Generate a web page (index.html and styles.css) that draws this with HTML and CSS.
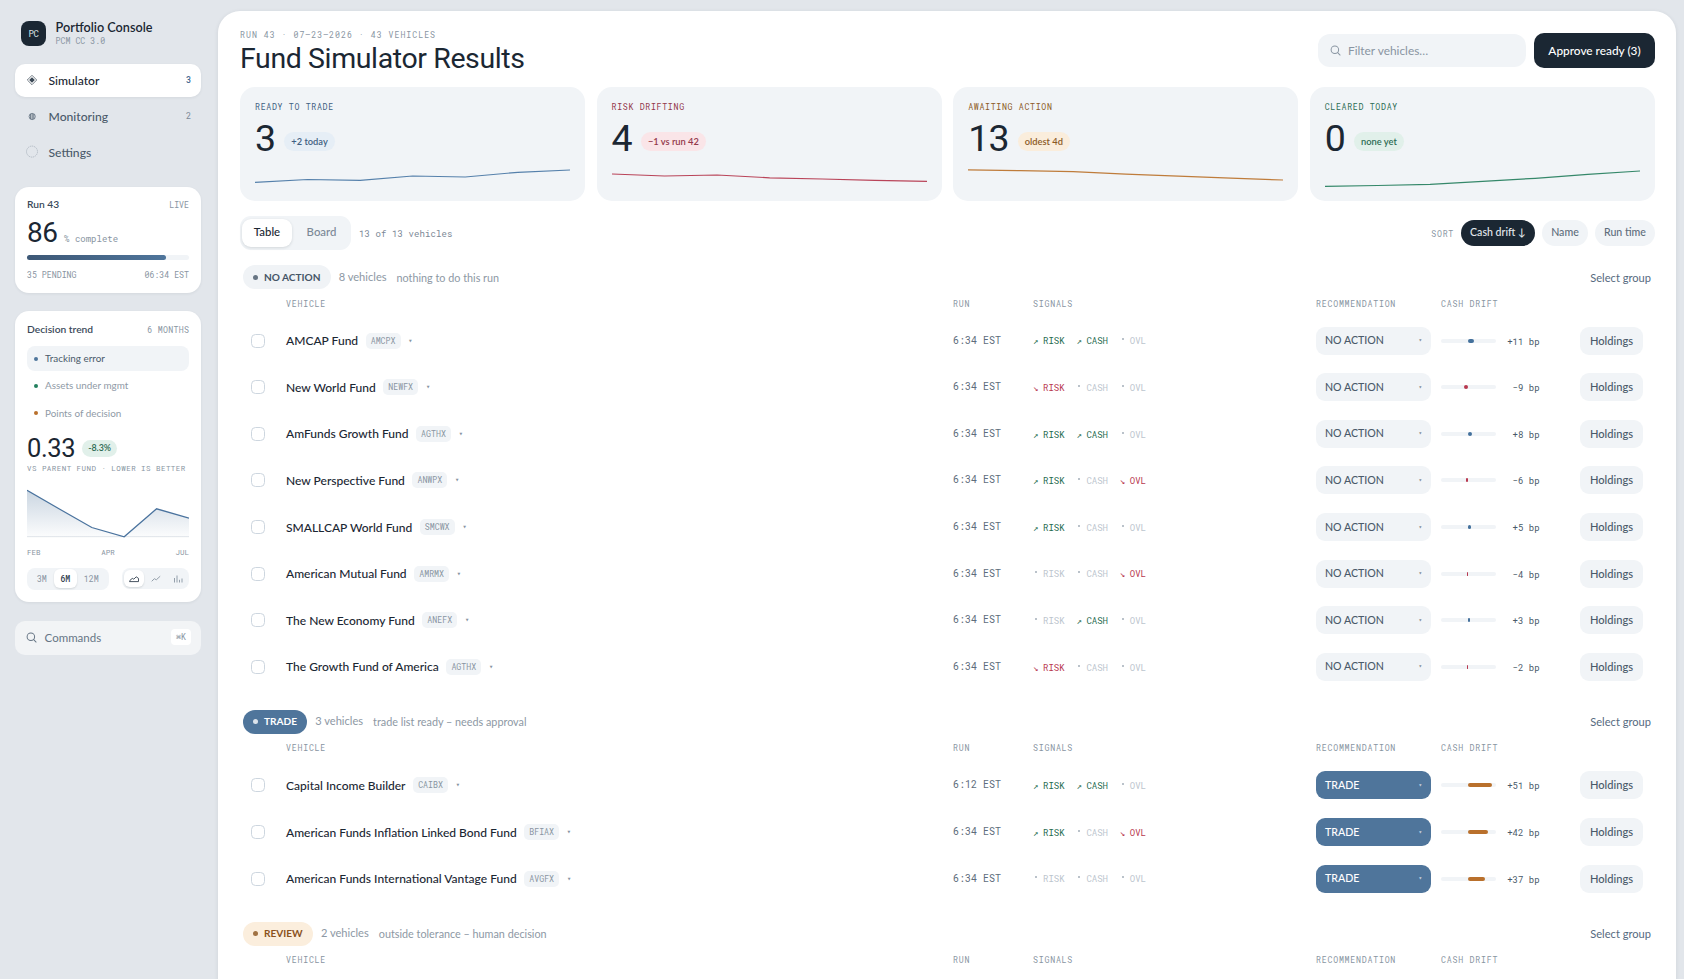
FILE: index.html
```html
<!DOCTYPE html>
<html lang="en">
<head>
<meta charset="utf-8">
<title>Portfolio Console</title>
<link rel="stylesheet" href="styles.css">
</head>
<body>
<svg class="defs" width="0" height="0">
  <symbol id="search" viewBox="0 0 12 12"><circle cx="5.3" cy="5.3" r="4.1"/><path d="M8.4 8.4 11 11"/></symbol>
</svg>
<div class="app">
  <aside class="side">
    <div class="brand">
      <span class="logo">PC</span>
      <div><div class="brand-name">Portfolio Console</div><div class="brand-sub">PCM CC 3.0</div></div>
    </div>
    <nav class="nav">
      <a class="nav-item on"><svg class="nav-ic" viewBox="0 0 12 12"><path d="M6 1.3 10.7 6 6 10.7 1.3 6Z" fill="none" stroke="currentColor" stroke-width=".7"/><path d="M6 3.2 8.8 6 6 8.8 3.2 6Z" fill="currentColor"/></svg><span>Simulator</span><b>3</b></a>
      <a class="nav-item"><svg class="nav-ic" viewBox="0 0 12 12"><circle cx="6.2" cy="6.5" r="3.1" fill="none" stroke="currentColor" stroke-width=".8"/><path d="M4.6 4v5M6.2 3.5v6M7.8 4v5" stroke="currentColor" stroke-width=".9"/></svg><span>Monitoring</span><b>2</b></a>
      <a class="nav-item"><svg class="nav-ic faint" viewBox="0 0 12 12"><circle cx="6" cy="5.6" r="5.5" fill="none" stroke="currentColor" stroke-width=".8" stroke-dasharray="1.4 .7"/></svg><span>Settings</span></a>
    </nav>
    <section class="card run">
      <div class="row-between"><h2>Run 43</h2><span class="mono">LIVE</span></div>
      <div class="run-val"><strong>86</strong><span>% complete</span></div>
      <div class="bar"><i></i></div>
      <div class="row-between foot"><span class="mono">35 PENDING</span><span class="mono">06:34 EST</span></div>
    </section>
    <section class="card trend">
      <div class="row-between"><h2>Decision trend</h2><span class="mono wide">6 MONTHS</span></div>
      <ul class="metrics">
        <li class="on"><i class="blue"></i>Tracking error</li>
        <li><i class="green"></i>Assets under mgmt</li>
        <li><i class="amber"></i>Points of decision</li>
      </ul>
      <div class="trend-val"><strong>0.33</strong><span>-8.3%</span></div>
      <div class="trend-cap">VS PARENT FUND · LOWER IS BETTER</div>
      <svg class="chart" viewBox="0 0 162 52">
        <defs><linearGradient id="fade" x1="0" y1="0" x2="0" y2="1"><stop offset="0" stop-color="#4f759b" stop-opacity=".3"/><stop offset="1" stop-color="#4f759b" stop-opacity=".02"/></linearGradient></defs>
        <path d="M0 49.7H162" stroke="#e2e6eb"/>
        <path d="M0 3.3 32.4 22 64.8 40.5 97.2 49.8 129.6 21.8 162 31.2V50H0Z" fill="url(#fade)"/>
        <path d="M0 3.3 32.4 22 64.8 40.5 97.2 49.8 129.6 21.8 162 31.2" fill="none" stroke="#4a739e" stroke-width="1.3"/>
      </svg>
      <div class="row-between months"><span>FEB</span><span>APR</span><span>JUL</span></div>
      <div class="controls">
        <div class="seg"><span>3M</span><span class="on">6M</span><span>12M</span></div>
        <div class="seg icons">
          <span class="on"><svg viewBox="0 0 10 8"><path d="M.3 6.6H9.5V3.4L7.2 1.8 4.8 4.2 3.3 3.4.9 5.4V6.6"/></svg></span>
          <span><svg viewBox="0 0 10 8"><path d="M.7 6.3 3.4 3.7 5.3 4.8 9.2 1.2"/></svg></span>
          <span><svg viewBox="0 0 10 8"><path d="M1.5 7.5V3M4 7.5V.5M6.5 7.5V4.8M9 7.5V3.5"/></svg></span>
        </div>
      </div>
    </section>
    <div class="commands"><svg class="search"><use href="#search"/></svg><span>Commands</span><kbd>⌘K</kbd></div>
  </aside>

  <main class="panel">
    <header class="head">
      <div>
        <div class="eyebrow">RUN 43 · 07–23–2026 · 43 VEHICLES</div>
        <h1>Fund Simulator Results</h1>
      </div>
      <div class="head-actions">
        <div class="filter"><svg class="search"><use href="#search"/></svg><span>Filter vehicles…</span></div>
        <button class="approve">Approve ready (3)</button>
      </div>
    </header>

    <section class="kpis">
      <article class="kpi k-blue"><h3>READY TO TRADE</h3><div class="kpi-val"><strong>3</strong><span>+2 today</span></div><svg viewBox="0 0 315 30" preserveAspectRatio="none"><path d="M0 22.3 52.5 19.5 105 20.3 157.5 16 210 17 262.5 12.3 315 10"/></svg></article>
      <article class="kpi k-red"><h3>RISK DRIFTING</h3><div class="kpi-val"><strong>4</strong><span>−1 vs run 42</span></div><svg viewBox="0 0 315 30" preserveAspectRatio="none"><path d="M0 14 52.5 16 105 15 157.5 17.8 210 19 262.5 20.3 315 21.3"/></svg></article>
      <article class="kpi k-amber"><h3>AWAITING ACTION</h3><div class="kpi-val"><strong>13</strong><span>oldest 4d</span></div><svg viewBox="0 0 315 30" preserveAspectRatio="none"><path d="M0 9.8 52.5 10.7 105 11.7 157.5 14.2 210 16.2 262.5 18.2 315 20"/></svg></article>
      <article class="kpi k-green"><h3>CLEARED TODAY</h3><div class="kpi-val"><strong>0</strong><span>none yet</span></div><svg viewBox="0 0 315 30" preserveAspectRatio="none"><path d="M0 26.4 52.5 25.5 105 24.4 157.5 21.4 210 18.3 262.5 14.3 315 11"/></svg></article>
    </section>

    <div class="toolbar">
      <div class="tabs"><span class="on">Table</span><span>Board</span></div>
      <span class="count">13 of 13 vehicles</span>
      <span class="sort-label">SORT</span>
      <div class="chips"><span class="on">Cash drift ↓</span><span>Name</span><span>Run time</span></div>
    </div>

    <section class="group">
      <div class="group-head"><span class="pill">NO ACTION</span><span class="n">8 vehicles</span><span class="note">nothing to do this run</span><a>Select group</a></div>
      <div class="grid cols"><span></span><span>VEHICLE</span><span>RUN</span><span>SIGNALS</span><span>RECOMMENDATION</span><span>CASH DRIFT</span><span></span></div>
      <div class="grid row"><i class="check"></i><div class="name">AMCAP Fund<em>AMCPX</em><small>▾</small></div><span class="time">6:34 EST</span><div class="sig"><span class="up">RISK</span><span class="up">CASH</span><span>OVL</span></div><div class="rec">NO ACTION<small>▾</small></div><div class="drift"><div class="track"><i class="pos" style="width:6px"></i></div><span>+11 bp</span></div><button class="hold">Holdings</button></div>
      <div class="grid row"><i class="check"></i><div class="name">New World Fund<em>NEWFX</em><small>▾</small></div><span class="time">6:34 EST</span><div class="sig"><span class="down">RISK</span><span>CASH</span><span>OVL</span></div><div class="rec">NO ACTION<small>▾</small></div><div class="drift"><div class="track"><i class="neg" style="width:4.2px"></i></div><span>−9 bp</span></div><button class="hold">Holdings</button></div>
      <div class="grid row"><i class="check"></i><div class="name">AmFunds Growth Fund<em>AGTHX</em><small>▾</small></div><span class="time">6:34 EST</span><div class="sig"><span class="up">RISK</span><span class="up">CASH</span><span>OVL</span></div><div class="rec">NO ACTION<small>▾</small></div><div class="drift"><div class="track"><i class="pos" style="width:4px"></i></div><span>+8 bp</span></div><button class="hold">Holdings</button></div>
      <div class="grid row"><i class="check"></i><div class="name">New Perspective Fund<em>ANWPX</em><small>▾</small></div><span class="time">6:34 EST</span><div class="sig"><span class="up">RISK</span><span>CASH</span><span class="down">OVL</span></div><div class="rec">NO ACTION<small>▾</small></div><div class="drift"><div class="track"><i class="neg" style="width:2.4px"></i></div><span>−6 bp</span></div><button class="hold">Holdings</button></div>
      <div class="grid row"><i class="check"></i><div class="name">SMALLCAP World Fund<em>SMCWX</em><small>▾</small></div><span class="time">6:34 EST</span><div class="sig"><span class="up">RISK</span><span>CASH</span><span>OVL</span></div><div class="rec">NO ACTION<small>▾</small></div><div class="drift"><div class="track"><i class="pos" style="width:3px"></i></div><span>+5 bp</span></div><button class="hold">Holdings</button></div>
      <div class="grid row"><i class="check"></i><div class="name">American Mutual Fund<em>AMRMX</em><small>▾</small></div><span class="time">6:34 EST</span><div class="sig"><span>RISK</span><span>CASH</span><span class="down">OVL</span></div><div class="rec">NO ACTION<small>▾</small></div><div class="drift"><div class="track"><i class="neg" style="width:1.4px"></i></div><span>−4 bp</span></div><button class="hold">Holdings</button></div>
      <div class="grid row"><i class="check"></i><div class="name">The New Economy Fund<em>ANEFX</em><small>▾</small></div><span class="time">6:34 EST</span><div class="sig"><span>RISK</span><span class="up">CASH</span><span>OVL</span></div><div class="rec">NO ACTION<small>▾</small></div><div class="drift"><div class="track"><i class="pos" style="width:2px"></i></div><span>+3 bp</span></div><button class="hold">Holdings</button></div>
      <div class="grid row"><i class="check"></i><div class="name">The Growth Fund of America<em>AGTHX</em><small>▾</small></div><span class="time">6:34 EST</span><div class="sig"><span class="down">RISK</span><span>CASH</span><span>OVL</span></div><div class="rec">NO ACTION<small>▾</small></div><div class="drift"><div class="track"><i class="neg" style="width:1px"></i></div><span>−2 bp</span></div><button class="hold">Holdings</button></div>
    </section>

    <section class="group trade">
      <div class="group-head"><span class="pill">TRADE</span><span class="n">3 vehicles</span><span class="note">trade list ready – needs approval</span><a>Select group</a></div>
      <div class="grid cols"><span></span><span>VEHICLE</span><span>RUN</span><span>SIGNALS</span><span>RECOMMENDATION</span><span>CASH DRIFT</span><span></span></div>
      <div class="grid row"><i class="check"></i><div class="name">Capital Income Builder<em>CAIBX</em><small>▾</small></div><span class="time">6:12 EST</span><div class="sig"><span class="up">RISK</span><span class="up">CASH</span><span>OVL</span></div><div class="rec">TRADE<small>▾</small></div><div class="drift"><div class="track"><i class="high" style="width:24px"></i></div><span>+51 bp</span></div><button class="hold">Holdings</button></div>
      <div class="grid row"><i class="check"></i><div class="name">American Funds Inflation Linked Bond Fund<em>BFIAX</em><small>▾</small></div><span class="time">6:34 EST</span><div class="sig"><span class="up">RISK</span><span>CASH</span><span class="down">OVL</span></div><div class="rec">TRADE<small>▾</small></div><div class="drift"><div class="track"><i class="high" style="width:20px"></i></div><span>+42 bp</span></div><button class="hold">Holdings</button></div>
      <div class="grid row"><i class="check"></i><div class="name">American Funds International Vantage Fund<em>AVGFX</em><small>▾</small></div><span class="time">6:34 EST</span><div class="sig"><span>RISK</span><span>CASH</span><span>OVL</span></div><div class="rec">TRADE<small>▾</small></div><div class="drift"><div class="track"><i class="high" style="width:17px"></i></div><span>+37 bp</span></div><button class="hold">Holdings</button></div>
    </section>

    <section class="group review">
      <div class="group-head"><span class="pill">REVIEW</span><span class="n">2 vehicles</span><span class="note">outside tolerance – human decision</span><a>Select group</a></div>
      <div class="grid cols"><span></span><span>VEHICLE</span><span>RUN</span><span>SIGNALS</span><span>RECOMMENDATION</span><span>CASH DRIFT</span><span></span></div>
    </section>
  </main>
</div>
</body>
</html>
```
FILE: styles.css
```css
:root {
  --ink: #1b2733;
  --slate: #4a5a6a;
  --muted: #8995a2;
  --soft: #f1f4f7;
  --blue: #4f759b;
  --green: #1f6b50;
  --red: #b8384f;
  --amber: #b9702c;
  --mono: "Roboto Mono", "DejaVu Sans Mono", monospace;
}
* { box-sizing: border-box; margin: 0; padding: 0; }
body { height: 979px; overflow: hidden; background: #e2e6eb; color: var(--ink); font-family: Lato, "Open Sans", sans-serif; }
button { border: 0; font-family: inherit; }
.defs { display: block; }
.app { display: flex; height: 979px; }
.search { width: 12px; height: 12px; fill: none; stroke: currentColor; stroke-width: 1.1; stroke-linecap: round; flex: none; }
.row-between { display: flex; align-items: center; justify-content: space-between; }
.mono { font: 400 8.25px/10px var(--mono); color: var(--muted); padding-top: 1px; margin-bottom: -1px; }
.wide { letter-spacing: .3px; margin-right: -.3px; }

/* Sidebar */
.side { width: 218px; flex: none; padding: 20px 17px 0 15px; }
.brand { display: flex; gap: 9.6px; padding-left: 6px; height: 27px; align-items: center; margin-bottom: 17px; }
.logo { width: 25px; height: 25px; border-radius: 8px; background: var(--ink); color: #dfe5ea; font: 400 9px/25px var(--mono); letter-spacing: -.3px; text-align: center; }
.brand-name { font-size: 12.67px; line-height: 15px; font-weight: 600; margin-top: -1px; }
.brand-sub { font: 400 8.25px/11px var(--mono); color: var(--muted); }
.nav { display: grid; gap: 3px; margin-bottom: 18px; }
.nav-item { height: 33px; display: flex; align-items: center; padding: 0 10px 1px 11px; border-radius: 10px; font-size: 12.15px; font-weight: 500; color: var(--slate); }
.nav-ic { width: 12px; height: 12px; margin-right: 10.5px; overflow: visible; color: #5e6d7c; }
.nav-ic.faint { color: #a9b3bd; }
.nav-item b { margin-left: auto; font: 400 8.5px/10px var(--mono); color: #7b8896; }
.nav-item.on { background: #fff; color: var(--ink); box-shadow: 0 1px 3px rgba(27, 39, 51, .07); }
.nav-item.on b { color: #44688f; font-weight: 500; }
.nav-item.on .nav-ic { color: #3a4754; }
.card { background: #fff; border-radius: 14px; padding: 12px; box-shadow: 0 1px 3px rgba(27, 39, 51, .07); margin-bottom: 18.5px; }
.card h2 { font-size: 10.25px; line-height: 10px; font-weight: 600; color: #3a4a5a; }
.run { height: 105.5px; }
.run-val { display: flex; align-items: baseline; gap: 6.4px; height: 28px; margin-top: 10px; }
.run-val strong { font: 400 28px/28px Roboto, sans-serif; letter-spacing: -.4px; }
.run-val span { font: 400 9px/12px var(--mono); color: var(--muted); }
.bar { height: 5px; margin-top: 8px; border-radius: 3px; background: var(--soft); }
.bar i { display: block; width: 86%; height: 5px; border-radius: 3px; background: linear-gradient(90deg, #3d5876, #4f759b); }
.foot { margin-top: 9px; }
.trend { height: 291px; }
.trend h2 { line-height: 12px; }
.metrics { list-style: none; display: grid; gap: 2.3px; margin-top: 11px; }
.metrics li { height: 25px; display: flex; align-items: center; gap: 7px; padding: 0 7px 1px; border-radius: 8px; font-size: 9.9px; color: #8f9aa6; }
.metrics li.on { background: var(--soft); color: var(--slate); }
.metrics i { width: 4px; height: 4px; border-radius: 50%; margin-top: 1px; }
.metrics .blue { background: var(--blue); } .metrics .green { background: #23805e; } .metrics .amber { background: var(--amber); }
.trend-val { display: flex; align-items: center; gap: 7px; height: 26px; margin-top: 9.4px; }
.trend-val strong { font: 400 25.5px/26px Roboto, sans-serif; letter-spacing: -.4px; }
.trend-val span { margin-top: 1px; padding: 0 6px; border-radius: 9px; background: #e1f0ea; color: #2d6a53; font-size: 8.9px; line-height: 16px; font-weight: 600; height: 17px; }
.trend-cap { font: 400 7.5px/10px var(--mono); letter-spacing: .46px; color: var(--muted); margin-top: 2.5px; white-space: nowrap; }
.chart { display: block; width: 162px; height: 52px; margin-top: 14px; }
.months { margin-top: 8px; font: 400 7.5px/10px var(--mono); color: var(--muted); }
.controls { display: flex; justify-content: space-between; align-items: center; margin-top: 10.5px; }
.seg { display: flex; align-items: center; height: 22px; padding: 0 3px; border-radius: 8px; background: var(--soft); font: 400 8.25px/19px var(--mono); color: var(--muted); }
.seg span { height: 19px; padding: 0 6.9px; border-radius: 6px; }
.seg .on { background: #fff; color: #33414f; font-weight: 500; box-shadow: 0 1px 2px rgba(27, 39, 51, .14); }
.seg.icons { height: 21px; gap: 2px; padding: 0 1.5px; }
.seg.icons span { width: 20px; height: 17px; padding: 0; display: flex; align-items: center; justify-content: center; }
.seg svg { width: 10px; height: 8px; fill: none; stroke: currentColor; stroke-width: .9; }
.seg:not(.icons) .on { padding: 0 6.7px; }
.commands { display: flex; align-items: center; height: 34px; padding: 0 10px 1px 11px; border-radius: 10px; background: #f2f4f6; color: #667585; font-size: 11.5px; }
.commands .search { width: 11px; height: 11px; }
.commands span { margin-left: 7.6px; }
.commands kbd { margin-left: auto; width: 20px; height: 16px; border-radius: 4px; background: #fff; color: var(--muted); font: 400 8.25px/16px var(--mono); text-align: center; }

/* Main panel */
.panel { width: 1458px; height: 1000px; margin-top: 11px; padding: 17px 21px 0 22px; border-radius: 22px; background: #fff; box-shadow: 0 1px 4px rgba(27, 39, 51, .1); flex: none; }
.head { display: flex; justify-content: space-between; align-items: flex-start; height: 59px; }
.eyebrow { font: 400 8.25px/11px var(--mono); letter-spacing: .99px; color: var(--muted); padding-top: .6px; }
h1 { font: 400 28.5px/32px Roboto, sans-serif; letter-spacing: -.39px; margin-top: 3.4px; }
.head-actions { display: flex; align-items: center; gap: 8px; margin-top: 5px; }
.filter { width: 208px; height: 33px; border-radius: 12px; background: var(--soft); display: flex; align-items: center; gap: 7px; padding-left: 12px; color: var(--muted); font-size: 11.9px; }
.filter .search { width: 11px; height: 11px; }
.approve { width: 121px; height: 35px; border-radius: 10px; background: var(--ink); color: #fff; font-size: 11.85px; font-weight: 500; padding-bottom: 1px; }
.kpis { display: grid; grid-template-columns: repeat(4, 1fr); gap: 11.25px; }
.kpi { height: 114px; border-radius: 15px; padding: 14.6px 15px 0; background: var(--soft); }
.kpi h3 { font: 400 8.25px/10px var(--mono); letter-spacing: .68px; }
.kpi-val { display: flex; align-items: flex-end; gap: 9px; height: 36px; margin-top: 8.4px; }
.kpi-val strong { font: 400 37.5px/36px Roboto, sans-serif; letter-spacing: -.75px; }
.kpi-val span { height: 19px; margin-bottom: 5px; padding: 0 7px; border-radius: 10px; font-size: 9.3px; line-height: 19px; font-weight: 600; }
.kpi svg { display: block; width: 100%; height: 30px; margin-top: 4.3px; fill: none; stroke-width: 1.2; }
.k-blue h3, .k-blue span { color: #3f5f82; } .k-blue span { background: #e6eef6; } .k-blue svg { stroke: #5580ab; }
.k-red h3, .k-red span { color: #93374a; } .k-red span { background: #fae5e8; } .k-red svg { stroke: #b94459; }
.k-amber h3, .k-amber span { color: #8c5a26; } .k-amber span { background: #faeddc; } .k-amber svg { stroke: #bf7c3b; }
.k-green h3, .k-green span { color: #2c6c54; } .k-green span { background: #e1f0ea; } .k-green svg { stroke: #35886a; }

.toolbar { display: flex; align-items: center; height: 34px; margin: 15px 0; }
.tabs { display: flex; align-items: center; width: 111px; height: 34px; padding: 0 2px; border-radius: 11px; background: var(--soft); font-size: 11.4px; font-weight: 500; color: #7b8896; }
.tabs span { height: 28px; line-height: 26px; width: 50px; text-align: center; border-radius: 9px; }
.tabs span + span { width: 57px; padding-left: 2px; }
.tabs .on { background: #fff; color: var(--ink); box-shadow: 0 1px 3px rgba(27, 39, 51, .14); }
.count { margin-left: 8px; padding-top: 1.4px; font: 400 9px/12px var(--mono); letter-spacing: .1px; color: #7b8896; }
.sort-label { margin: 0 7px 0 auto; padding-top: 1px; font: 400 8.25px/12px var(--mono); letter-spacing: .7px; color: var(--muted); }
.chips { display: flex; gap: 7px; font-size: 10.6px; font-weight: 500; color: #5e6d7c; }
.chips span { height: 26px; line-height: 25px; padding: 0 9.1px; border-radius: 13px; background: var(--soft); }
.chips .on { background: var(--ink); color: #e4e9ee; }

.group { margin: 0 3px 19.6px; }
.group-head { display: flex; align-items: center; height: 24px; font-size: 10.8px; color: #8d98a4; }
.pill { display: flex; align-items: center; height: 24px; padding: 0 10.2px 1px 10px; border-radius: 12px; background: #f0f3f6; color: #455566; font-size: 10.1px; font-weight: 700; }
.pill::before { content: ""; width: 5px; height: 5px; margin: 1px 6px 0 0; border-radius: 50%; background: currentColor; opacity: .8; }
.group-head .n { margin-left: 8px; font-size: 11.1px; padding-bottom: 2px; }
.group-head .note { margin-left: 10px; }
.group-head a { margin-left: auto; margin-right: 1px; font-size: 11.1px; color: #566a80; }
.trade .pill { background: var(--blue); color: #fff; }
.review .pill { background: #fbeedd; color: #8a521c; }

.grid { display: grid; grid-template-columns: 35px 1fr 80px 283px 125px 139px 63px; padding: 0 9px 0 8px; align-items: center; }
.cols { height: 28.4px; padding-top: 1px; font: 400 8.25px/10px var(--mono); letter-spacing: .77px; color: var(--muted); }
.row { height: 46.6px; }
.check { width: 14px; height: 14px; border: 1.2px solid #cdd6df; border-radius: 4.5px; }
.name { display: flex; align-items: center; font-size: 12.03px; font-weight: 500; }
.name em { margin-left: 7.5px; width: 35px; height: 16px; border-radius: 5px; background: var(--soft); color: var(--muted); font: 400 8.25px/15px var(--mono); text-align: center; }
.name small { margin-left: 7.7px; font: 400 7px/10px "DejaVu Sans Mono", monospace; color: var(--muted); }
.time { font: 400 10px/14px var(--mono); color: #5e6d7c; }
.sig { display: flex; gap: 11.8px; font: 400 9px/12px var(--mono); color: #bcc5ce; padding-top: 1.4px; }
.sig span { display: flex; }
.sig span::before { content: ""; width: 2px; height: 2px; margin: 3px 6px 0 2px; border-radius: 1px; background: #a3aeb9; }
.sig .up { color: var(--green); }
.sig .down { color: var(--red); }
.sig .up::before, .sig .down::before { width: 10px; height: auto; margin: 0; background: none; font-family: "DejaVu Sans Mono", monospace; }
.sig .up::before { content: "↗"; }
.sig .down::before { content: "↘"; }
.rec { display: flex; align-items: center; justify-content: space-between; width: 115px; height: 28px; padding: 0 9px 1px; border-radius: 9px; background: var(--soft); color: var(--slate); font-size: 10.6px; font-weight: 500; }
.rec small { font: 400 6px/10px "DejaVu Sans Mono", monospace; opacity: .7; }
.trade .rec { background: var(--blue); color: #fff; }
.drift { display: flex; align-items: center; width: 98.6px; font: 400 9px/12px var(--mono); color: var(--slate); }
.drift span { margin-left: auto; padding-top: 2px; }
.track { display: flex; width: 55px; height: 4px; border-radius: 2px; background: var(--soft); }
.track i { display: block; height: 4px; border-radius: 2px; margin-left: 27px; }
.track .neg { margin: 0 27.8px 0 auto; background: var(--red); }
.track .pos { background: #44719c; }
.track .high { background: var(--amber); }
.hold { height: 28px; padding-bottom: 1px; border-radius: 9px; background: var(--soft); color: var(--slate); font-size: 11.1px; font-weight: 500; }
```
